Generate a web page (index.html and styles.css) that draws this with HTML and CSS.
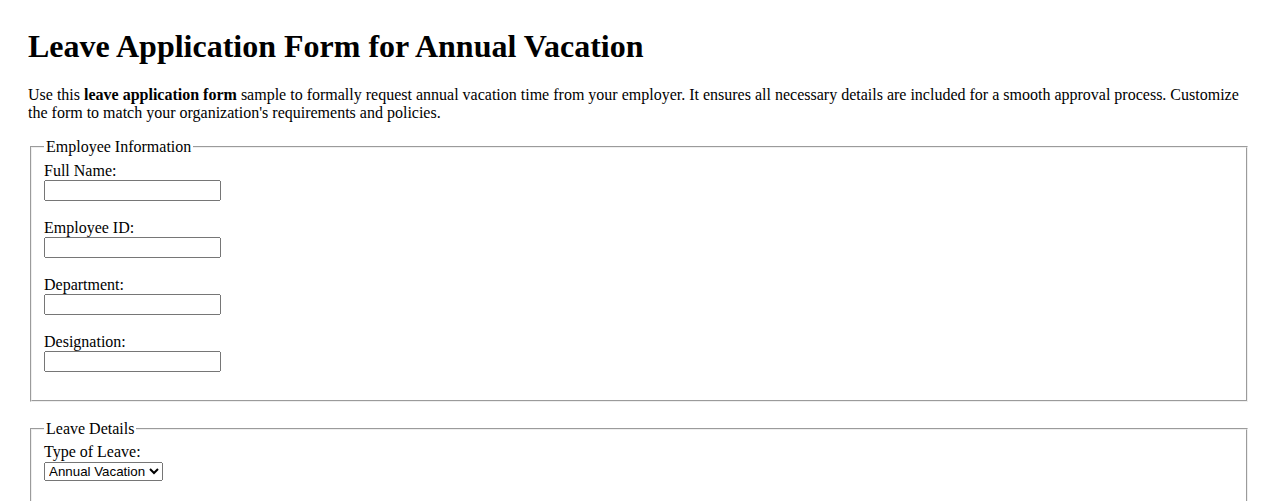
FILE: index.html
```html
<!DOCTYPE html>
<html lang="en">
<head>
<meta charset="utf-8">
<title>Leave Application Form for Annual Vacation</title>
<link rel="stylesheet" href="styles.css">
</head>
<body>
<h1>Leave Application Form for Annual Vacation</h1>
<p>Use this <strong>leave application form</strong> sample to formally request annual vacation time from your employer. It ensures all necessary details are included for a smooth approval process. Customize the form to match your organization's requirements and policies.</p>
<form>
  <fieldset>
    <legend>Employee Information</legend>
    <label for="name">Full Name:</label><br>
    <input class="field" type="text" id="name" name="name"><br><br>
    <label for="empid">Employee ID:</label><br>
    <input class="field" type="text" id="empid" name="empid"><br><br>
    <label for="dept">Department:</label><br>
    <input class="field" type="text" id="dept" name="dept"><br><br>
    <label for="desig">Designation:</label><br>
    <input class="field" type="text" id="desig" name="desig"><br><br>
  </fieldset>
  <br>
  <fieldset>
    <legend>Leave Details</legend>
    <label for="type">Type of Leave:</label><br>
    <select class="choice" id="type" name="type">
      <option>Annual Vacation</option>
      <option>Sick Leave</option>
      <option>Personal Leave</option>
    </select><br><br>
    <label for="start">Start Date:</label><br>
    <input type="date" id="start" name="start"><br><br>
  </fieldset>
</form>
</body>
</html>
```
FILE: styles.css
```css
body {
  margin: 28px 28px 28px 28px;
  font-family: "Liberation Serif", "Times New Roman", serif;
  font-size: 16px;
  color: #000;
  background: #fff;
}

h1 {
  font-size: 32px;
  margin: 0 0 21px;
}

p {
  margin: 0 0 16px;
}

input,
select {
  font-family: "Liberation Sans", Arial, sans-serif;
}

.field {
  box-sizing: border-box;
  width: 177px;
}

.choice {
  margin-top: 1px;
}
```
